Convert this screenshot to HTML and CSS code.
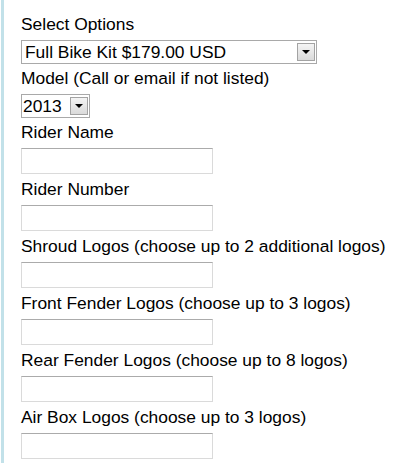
FILE: index.html
```html
<!DOCTYPE html>
<html lang="en">
<head>
    <meta charset="UTF-8">
    <title>Product Options</title>
    <link rel="stylesheet" href="styles.css">
</head>
<body>
    <div class="page">
        <form class="options">
            <label>Select Options</label>
            <div class="fake-select wide">
                <span class="value">Full Bike Kit $179.00 USD</span>
                <span class="drop">
                    <svg width="8" height="4" viewBox="0 0 8 4"><path d="M0 0H8L4 4Z" fill="#000"/></svg>
                </span>
            </div>

            <label>Model (Call or email if not listed)</label>
            <div class="fake-select small">
                <span class="value">2013</span>
                <span class="drop">
                    <svg width="8" height="4" viewBox="0 0 8 4"><path d="M0 0H8L4 4Z" fill="#000"/></svg>
                </span>
            </div>

            <label for="riderName">Rider Name</label>
            <input type="text" id="riderName">

            <label for="riderNumber">Rider Number</label>
            <input type="text" id="riderNumber">

            <label for="shroud">Shroud Logos (choose up to 2 additional logos)</label>
            <input type="text" id="shroud">

            <label for="frontFender">Front Fender Logos (choose up to 3 logos)</label>
            <input type="text" id="frontFender">

            <label for="rearFender">Rear Fender Logos (choose up to 8 logos)</label>
            <input type="text" id="rearFender">

            <label for="airBox">Air Box Logos (choose up to 3 logos)</label>
            <input type="text" id="airBox">
        </form>
    </div>
</body>
</html>
```

FILE: styles.css
```css
body {
    margin: 0;
    background: #fff;
    font-family: "Liberation Sans", Arial, sans-serif;
    font-size: 17.4px;
    color: #000;
}
.page {
    margin-left: 1px;
    border-left: 3px solid #c2e1e9;
    padding: 14px 0 0 17px;
    min-height: 463px;
    box-sizing: border-box;
}
.options label {
    display: block;
    line-height: 20px;
    margin-bottom: 6px;
}
.fake-select {
    display: flex;
    align-items: center;
    justify-content: space-between;
    height: 24px;
    box-sizing: border-box;
    border: 1px solid #a9a9a9;
    background: #fff;
    margin-bottom: 4px;
    padding: 0 1px 0 3px;
}
.fake-select.wide {
    width: 296px;
}
.fake-select.small {
    width: 69px;
    padding-left: 1px;
}
.fake-select .value {
    line-height: 20px;
}
.drop {
    display: flex;
    align-items: center;
    justify-content: center;
    width: 18px;
    height: 18px;
    box-sizing: border-box;
    border: 1px solid #a3a3a3;
    background: linear-gradient(#f4f4f4, #dadada);
}
input {
    display: block;
    width: 192px;
    height: 26px;
    box-sizing: border-box;
    margin: 0 0 5px;
    padding: 2px;
    border: 1px solid #dadada;
    border-top-color: #ababab;
    font: inherit;
}
```
